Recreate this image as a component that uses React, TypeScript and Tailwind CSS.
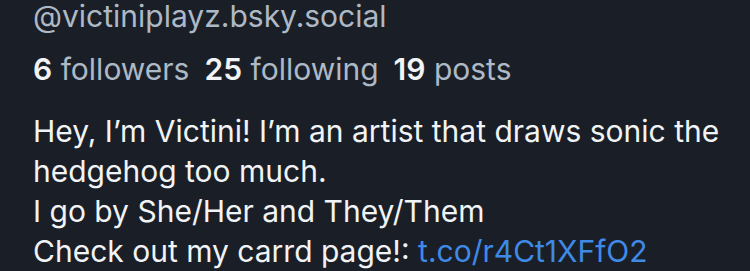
export default function App() {
  return (
    <div
      className="w-[750px] h-[271px] overflow-hidden bg-[#1a1f27] pl-[33px] text-[30px] leading-[40px]"
      style={{ fontFamily: 'Inter, "Noto Sans", sans-serif' }}
    >
      <div className="-mt-[4px] text-[#aeb9c6]">@victiniplayz.bsky.social</div>
      <div className="mt-[13px] flex gap-[15px] text-[#aeb9c6]">
        <span>
          <span className="font-semibold text-[#f1f3f5]">6</span> followers
        </span>
        <span>
          <span className="font-semibold text-[#f1f3f5]">25</span> following
        </span>
        <span>
          <span className="font-semibold text-[#f1f3f5]">19</span> posts
        </span>
      </div>
      <div className="mt-[22px] text-[#f1f3f5]">
        <div>Hey, I’m Victini! I’m an artist that draws sonic the</div>
        <div>hedgehog too much.</div>
        <div>I go by She/Her and They/Them</div>
        <div>
          Check out my carrd page!: <span className="text-[#3f8ae6]">t.co/r4Ct1XFfO2</span>
        </div>
      </div>
    </div>
  );
}
